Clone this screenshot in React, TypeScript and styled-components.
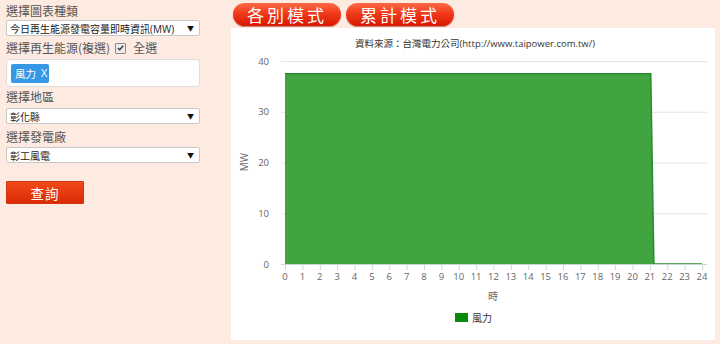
import React from "react";
import styled, { createGlobalStyle } from "styled-components";

const Global = createGlobalStyle`
  html, body { margin: 0; padding: 0; }
  body {
    background: #fdebe2;
    font-family: "Open Sans", "Noto Sans CJK TC", sans-serif;
    width: 720px;
    height: 344px;
    overflow: hidden;
  }
`;

const Page = styled.div`
  display: flex;
  width: 720px;
  height: 344px;
`;

const Sidebar = styled.div`
  width: 194px;
  padding: 3px 0 0 6px;
  display: flex;
  flex-direction: column;
`;

const Label = styled.div<{ $mt?: number }>`
  height: 16px;
  line-height: 16px;
  font-size: 12px;
  color: #555;
  font-family: "Noto Sans CJK TC", sans-serif;
  margin-top: ${(p) => p.$mt ?? 0}px;
  display: flex;
  align-items: center;
`;

const Select = styled.div<{ $mt?: number }>`
  height: 16px;
  box-sizing: border-box;
  background: #fff;
  border: 1px solid #c8c8c8;
  border-radius: 2px;
  margin-top: ${(p) => p.$mt ?? 0}px;
  display: flex;
  align-items: center;
  justify-content: space-between;
  padding: 0 5px 0 3px;
  font-size: 10px;
  color: #222;
  font-family: "Open Sans", "Noto Sans CJK TC", sans-serif;
  white-space: nowrap;
  overflow: hidden;
`;

const Arrow = styled.span`
  font-size: 7px;
  color: #111;
`;

const Check = styled.span`
  display: inline-flex;
  width: 9px;
  height: 9px;
  border: 1px solid #8a8a8a;
  background: #ececec;
  border-radius: 1px;
  margin: 0 7px 0 5px;
  align-items: center;
  justify-content: center;
`;

const MultiBox = styled.div`
  margin-top: 3px;
  height: 28px;
  box-sizing: border-box;
  background: #fff;
  border: 1px solid #ddd;
  border-radius: 4px;
  display: flex;
  align-items: center;
  padding-left: 4px;
`;

const Tag = styled.span`
  background: #3498e6;
  color: #fff;
  height: 19px;
  width: 38px;
  box-sizing: border-box;
  padding-left: 4px;
  border-radius: 2px;
  font-size: 10.5px;
  display: flex;
  align-items: center;
  gap: 5px;
  font-family: "Noto Sans CJK TC", sans-serif;
`;

const TagX = styled.span`
  font-family: "Open Sans", sans-serif;
  font-size: 11px;
  line-height: 1;
  margin-top: -2px;
`;

const QueryButton = styled.button`
  margin-top: 18px;
  width: 78px;
  height: 23px;
  border: 1px solid #d2360e;
  border-radius: 1px;
  background: linear-gradient(#f04a1a, #dc2a06);
  color: #fff;
  font-size: 13.5px;
  letter-spacing: 1px;
  font-family: "Noto Sans CJK TC", sans-serif;
  padding: 0;
`;

const Main = styled.div`
  margin-left: 31px;
  width: 484px;
  display: flex;
  flex-direction: column;
`;

const ModeBar = styled.div`
  height: 28px;
  display: flex;
  gap: 5px;
  padding: 3px 0 0 2px;
  box-sizing: border-box;
`;

const ModeButton = styled.div`
  width: 108px;
  height: 23px;
  border-radius: 12px;
  background: linear-gradient(#ff6a48 0%, #f03a1a 45%, #d81800 100%);
  box-shadow: 0 1px 1px rgba(150, 20, 0, 0.5);
  color: #fff;
  font-size: 17px;
  letter-spacing: 3px;
  display: flex;
  align-items: center;
  justify-content: center;
  font-family: "Noto Sans CJK TC", sans-serif;
  line-height: 1;
`;

const Panel = styled.div`
  background: #fff;
  height: 312px;
  width: 484px;
`;

const hours = Array.from({ length: 25 }, (_, i) => i);
const x0 = 54;
const step = 17.375;
const yBase = 236;
const perUnit = 5.075;
const xs = (h: number) => x0 + h * step;
const ys = (v: number) => yBase - v * perUnit;

function Chart() {
  const top = ys(37.5);
  const area = `M${xs(0)},${yBase} L${xs(0)},${top} L${xs(21.05)},${top} L${xs(21.23)},${yBase} L${xs(24)},${yBase} Z`;
  const line = `M${xs(0)},${top} L${xs(21.05)},${top} L${xs(21.23)},${yBase} L${xs(24)},${yBase}`;
  return (
    <svg width={484} height={312} fontFamily={'"Open Sans", "Noto Sans CJK TC", sans-serif'}>
      <text x={244} y={19} fontSize={9.5} fill="#333" textAnchor="middle">
        資料來源：台灣電力公司(http://www.taipower.com.tw/)
      </text>
      {[0, 10, 20, 30, 40].map((v) => (
        <g key={v}>
          <line x1={50} x2={476} y1={ys(v) + 0.5} y2={ys(v) + 0.5} stroke="#e4e4e4" />
          <text x={38} y={ys(v) + 3.5} fontSize={9.5} fill="#666" textAnchor="end">
            {v}
          </text>
        </g>
      ))}
      <path d={area} fill="#40a440" />
      <path d={line} fill="none" stroke="#2b8a2b" strokeWidth={1.5} />
      <line x1={50} x2={476} y1={yBase + 0.5} y2={yBase + 0.5} stroke="#c8d8c8" />
      {hours.map((h) => (
        <g key={h}>
          <line x1={xs(h) + 0.5} x2={xs(h) + 0.5} y1={yBase} y2={yBase + 6} stroke="#c8d8d8" />
          <text x={xs(h)} y={252} fontSize={9.5} fill="#666" textAnchor="middle">
            {h}
          </text>
        </g>
      ))}
      <text x={262} y={272} fontSize={10} fill="#666" textAnchor="middle">
        時
      </text>
      <text
        x={17}
        y={134}
        fontSize={10}
        fill="#666"
        textAnchor="middle"
        transform="rotate(-90 17 134)"
      >
        MW
      </text>
      <rect x={224} y={285} width={13} height={9} fill="#0a8a0a" />
      <text x={241} y={293.5} fontSize={10} fill="#333">
        風力
      </text>
    </svg>
  );
}

export default function App() {
  return (
    <>
      <Global />
      <Page>
        <Sidebar>
          <Label>選擇圖表種類</Label>
          <Select $mt={1}>
            <span>今日再生能源發電容量即時資訊(MW)</span>
            <Arrow>▼</Arrow>
          </Select>
          <Label $mt={4}>
            選擇再生能源(複選)
            <Check>
              <svg width="7" height="6" viewBox="0 0 7 6">
                <path d="M0.8 3 L2.7 4.8 L6.2 0.8" fill="none" stroke="#333" strokeWidth="1.3" />
              </svg>
            </Check>
            全選
          </Label>
          <MultiBox>
            <Tag>
              風力<TagX>X</TagX>
            </Tag>
          </MultiBox>
          <Label $mt={2}>選擇地區</Label>
          <Select $mt={3}>
            <span>彰化縣</span>
            <Arrow>▼</Arrow>
          </Select>
          <Label $mt={5}>選擇發電廠</Label>
          <Select $mt={2}>
            <span>彰工風電</span>
            <Arrow>▼</Arrow>
          </Select>
          <QueryButton>查詢</QueryButton>
        </Sidebar>
        <Main>
          <ModeBar>
            <ModeButton>各別模式</ModeButton>
            <ModeButton>累計模式</ModeButton>
          </ModeBar>
          <Panel>
            <Chart />
          </Panel>
        </Main>
      </Page>
    </>
  );
}
